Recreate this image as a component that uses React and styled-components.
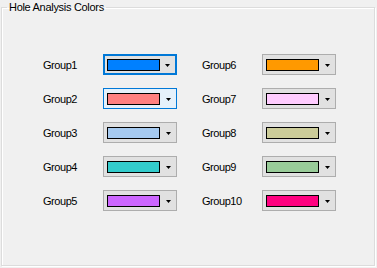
import React from "react";
import styled, { createGlobalStyle } from "styled-components";

const groups = [
  { name: "Group1", color: "#0080ff", state: "focus" },
  { name: "Group6", color: "#ff9900" },
  { name: "Group2", color: "#ff8080", state: "hover" },
  { name: "Group7", color: "#ffccff" },
  { name: "Group3", color: "#a6caf0" },
  { name: "Group8", color: "#cccc99" },
  { name: "Group4", color: "#33cccc" },
  { name: "Group9", color: "#99cc99" },
  { name: "Group5", color: "#cc66ff" },
  { name: "Group10", color: "#ff0080" },
];

function App() {
  return (
    <>
      <GlobalStyle />
      <Page>
        <GroupBox>
          <Title>Hole Analysis Colors</Title>
          <Grid>
            {groups.map((g) => (
              <Field key={g.name}>
                <Label>{g.name}</Label>
                <Combo $state={g.state}>
                  <Swatch style={{ background: g.color }} />
                  <ArrowBox>
                    <svg width="5" height="3" viewBox="0 0 5 3">
                      <polygon points="0,0 5,0 2.5,3" fill="#000" />
                    </svg>
                  </ArrowBox>
                </Combo>
              </Field>
            ))}
          </Grid>
        </GroupBox>
      </Page>
    </>
  );
}

const GlobalStyle = createGlobalStyle`
  body {
    margin: 0;
    background: #f0f0f0;
    font-family: "Liberation Sans", Arial, sans-serif;
  }
`;

const Page = styled.div`
  width: 377px;
  height: 268px;
  background: #f0f0f0;
  box-sizing: border-box;
  padding-left: 1px;
`;

const GroupBox = styled.fieldset`
  box-sizing: border-box;
  width: 374px;
  height: 266px;
  margin: 0;
  padding: 0;
  border: 1px solid #dcdcdc;
  box-shadow: 1px 1px 0 #fff, inset 1px 1px 0 #fff;
`;

const Title = styled.legend`
  margin-left: 5px;
  padding: 0 2px;
  font-size: 11px;
  line-height: 14px;
  letter-spacing: -0.3px;
  color: #000;
`;

const Grid = styled.div`
  display: grid;
  grid-template-columns: 159px 160px;
  row-gap: 13px;
  margin: 40px 0 0 41px;
`;

const Field = styled.div`
  display: flex;
  align-items: center;
`;

const Label = styled.span`
  width: 60px;
  font-size: 11px;
  letter-spacing: -0.45px;
  color: #000;
`;

const Combo = styled.div`
  box-sizing: border-box;
  width: 74px;
  height: 21px;
  display: flex;
  align-items: center;
  padding-left: ${(p) => (p.$state === "focus" ? "2px" : "3px")};
  border: ${(p) =>
    p.$state === "focus"
      ? "2px solid #0078d7"
      : p.$state === "hover"
      ? "1px solid #0078d7"
      : "1px solid #adadad"};
  background: ${(p) => (p.$state === "hover" ? "#e5f1fb" : "#e1e1e1")};
`;

const Swatch = styled.div`
  box-sizing: border-box;
  width: 53px;
  height: 12px;
  border: 1px solid #000;
`;

const ArrowBox = styled.div`
  flex: 1;
  display: flex;
  justify-content: center;
  align-items: center;
  padding-top: 1px;
  svg {
    display: block;
  }
`;

export default App;
